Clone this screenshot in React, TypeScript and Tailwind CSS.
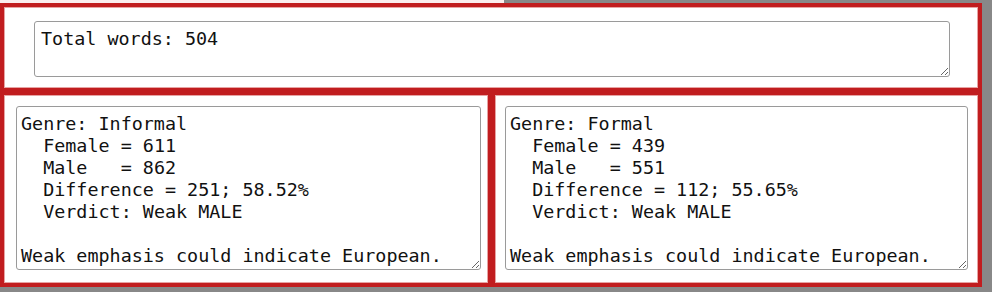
import React from "react";

const informal = `Genre: Informal
  Female = 611
  Male   = 862
  Difference = 251; 58.52%
  Verdict: Weak MALE

Weak emphasis could indicate European.`;

const formal = `Genre: Formal
  Female = 439
  Male   = 551
  Difference = 112; 55.65%
  Verdict: Weak MALE

Weak emphasis could indicate European.`;

const mono = "font-['DejaVu_Sans_Mono',monospace] text-[18.4px] leading-[22px] text-[#111]";

const Panel = ({ className, children }: { className: string; children: React.ReactNode }) => (
  <div
    className={`border-4 border-[#c11d1f] bg-white shadow-[inset_0_0_0_1px_#e7a3a3] ${className}`}
  >
    {children}
  </div>
);

const Box = ({ value, className }: { value: string; className: string }) => (
  <textarea
    readOnly
    defaultValue={value}
    className={`block rounded-[3px] border border-[#9a9a9a] bg-white outline-none overflow-hidden ${mono} ${className}`}
  />
);

export default function App() {
  return (
    <div className="w-[992px] h-[292px] bg-[#888888] overflow-hidden">
      <div className="flex h-[3px]">
        <div className="w-[504px] bg-[#fbeeee]" />
        <div className="flex-1" />
      </div>
      <div className="w-[982px] flex flex-col">
        <Panel className="h-[89px] pl-[30px] pr-[28px] pt-[14px]">
          <Box value="Total words: 504" className="w-full h-[56px] px-[6px] pt-[6px]" />
        </Panel>
        <div className="flex h-[196px] -mt-px">
          <Panel className="w-[492px] pl-[12px] pt-[11px]">
            <Box value={informal} className="w-[465px] h-[164px] px-[4px] pt-[6px]" />
          </Panel>
          <Panel className="w-[491px] -ml-px pl-[10px] pt-[11px]">
            <Box value={formal} className="w-[463px] h-[164px] px-[4px] pt-[6px]" />
          </Panel>
        </div>
      </div>
    </div>
  );
}
